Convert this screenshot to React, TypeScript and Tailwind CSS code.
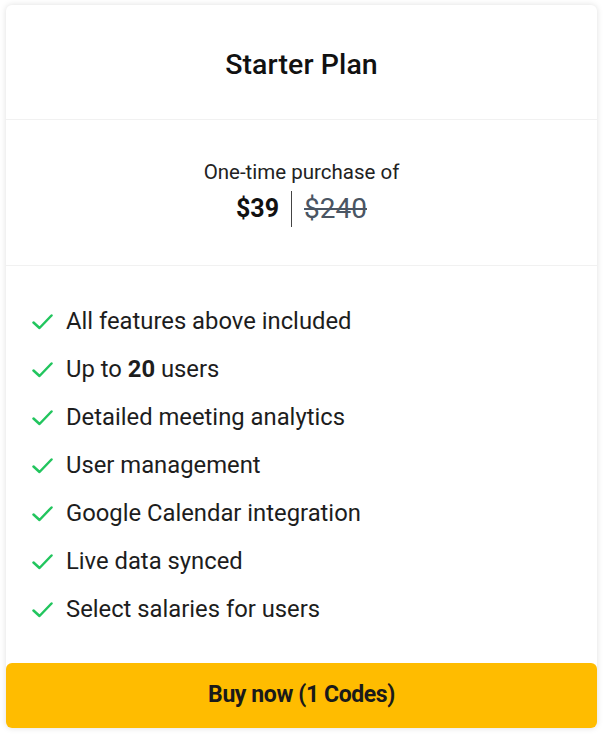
const features: { text: React.ReactNode }[] = [
  { text: 'All features above included' },
  {
    text: (
      <>
        Up to <span className="font-bold">20</span> users
      </>
    ),
  },
  { text: 'Detailed meeting analytics' },
  { text: 'User management' },
  { text: 'Google Calendar integration' },
  { text: 'Live data synced' },
  { text: 'Select salaries for users' },
]

function CheckMark() {
  return (
    <svg width="21" height="16" viewBox="0 0 21 16" fill="none" className="shrink-0">
      <polyline
        points="1.5,8.5 7.5,14 19.5,1.5"
        stroke="#22c55e"
        strokeWidth="2.5"
        strokeLinecap="round"
        strokeLinejoin="round"
      />
    </svg>
  )
}

export default function App() {
  return (
    <div className="min-h-[735px] bg-white px-[6px] pt-[5px] pb-[7px] font-['Roboto','Liberation_Sans',sans-serif]">
      <div className="bg-white rounded-md shadow-[0_0_6px_rgba(0,0,0,0.13)]">
        {/* Cabecera */}
        <div className="h-[115px] flex items-center justify-center border-b border-[#f1f1f1] pt-[7px]">
          <h2 className="text-[28.5px] font-medium text-[#111] tracking-[0.1px]">Starter Plan</h2>
        </div>

        {/* Precio */}
        <div className="h-[146px] flex flex-col items-center justify-center border-b border-[#f1f1f1] pt-[2px]">
          <p className="text-[20.5px] text-[#222] leading-[28px]">One-time purchase of</p>
          <div className="flex items-center mt-[2px]">
            <span className="text-[25px] font-bold text-[#111] pr-[12px]">$39</span>
            <span className="w-px h-[36px] bg-[#444]" />
            <span className="text-[28px] text-[#4a5563] line-through pl-[12px]">$240</span>
          </div>
        </div>

        {/* Lista */}
        <ul className="pt-[32px] pb-[29px] pl-[26px]">
          {features.map((f, i) => (
            <li key={i} className="h-[48px] flex items-center gap-[13px] text-[23.8px] text-[#1d1d1d]">
              <CheckMark />
              <span>{f.text}</span>
            </li>
          ))}
        </ul>

        {/* Botón */}
        <button className="w-full h-[65px] rounded-md bg-[#ffbc00] text-[23px] font-bold text-[#1a1a1a] tracking-[-0.4px]">
          Buy now (1 Codes)
        </button>
      </div>
    </div>
  )
}
